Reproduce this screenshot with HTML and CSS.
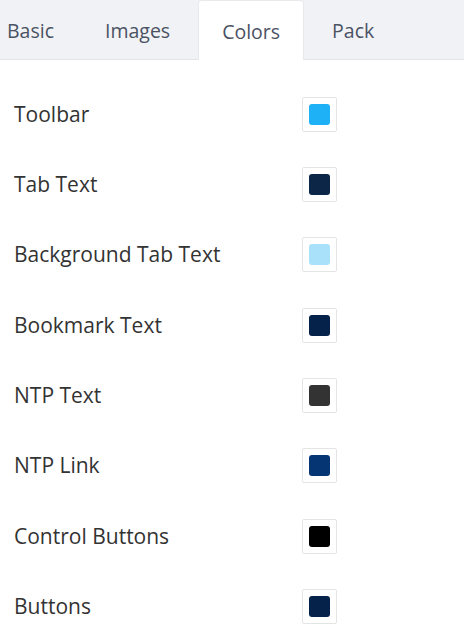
FILE: index.html
```html
<!DOCTYPE html>
<html>
<head>
<meta charset="utf-8">
<link rel="stylesheet" href="styles.css">
</head>
<body>
<div class="tabs">
  <div class="tab">Basic</div>
  <div class="tab">Images</div>
  <div class="tab active">Colors</div>
  <div class="tab">Pack</div>
</div>
<div class="list">
  <div class="row"><span class="label">Toolbar</span><span class="box"><span class="sw c1"></span></span></div>
  <div class="row"><span class="label">Tab Text</span><span class="box"><span class="sw c2"></span></span></div>
  <div class="row"><span class="label">Background Tab Text</span><span class="box"><span class="sw c3"></span></span></div>
  <div class="row"><span class="label">Bookmark Text</span><span class="box"><span class="sw c4"></span></span></div>
  <div class="row"><span class="label">NTP Text</span><span class="box"><span class="sw c5"></span></span></div>
  <div class="row"><span class="label">NTP Link</span><span class="box"><span class="sw c6"></span></span></div>
  <div class="row"><span class="label">Control Buttons</span><span class="box"><span class="sw c7"></span></span></div>
  <div class="row"><span class="label">Buttons</span><span class="box"><span class="sw c4"></span></span></div>
</div>
</body>
</html>
```
FILE: styles.css
```css
html, body {
  margin: 0;
  padding: 0;
  background: #ffffff;
  font-family: "Open Sans", "Noto Sans", sans-serif;
  overflow: hidden;
}
.tabs {
  display: flex;
  align-items: flex-end;
  gap: 5px;
  height: 59px;
  background: #f1f2f6;
  border-bottom: 1px solid #e3e4e8;
  margin-left: -16px;
}
.tab {
  height: 58px;
  box-sizing: border-box;
  padding: 0 23px;
  display: flex;
  align-items: center;
  font-size: 19.5px;
  color: #4a5263;
  border-radius: 4px 4px 0 0;
}
.tab.active {
  background: #ffffff;
  border: 1px solid #e8e9ec;
  border-bottom: none;
  margin-bottom: -1px;
  height: 60px;
  padding-top: 1px;
}
.list {
  padding-top: 36.5px;
  padding-left: 14px;
}
.row {
  height: 70.4px;
  display: flex;
  align-items: flex-start;
}
.label {
  width: 288px;
  font-size: 21px;
  color: #333333;
  line-height: 35px;
}
.box {
  width: 35px;
  height: 35px;
  box-sizing: border-box;
  border: 1px solid #e4e4e4;
  border-radius: 2px;
  padding: 6px;
  display: flex;
}
.sw {
  flex: 1;
  border-radius: 3px;
}
.c1 { background: #1fb1f6; }
.c2 { background: #0c2647; }
.c3 { background: #a9e0fa; }
.c4 { background: #05224a; }
.c5 { background: #333333; }
.c6 { background: #063574; }
.c7 { background: #000000; }
```
